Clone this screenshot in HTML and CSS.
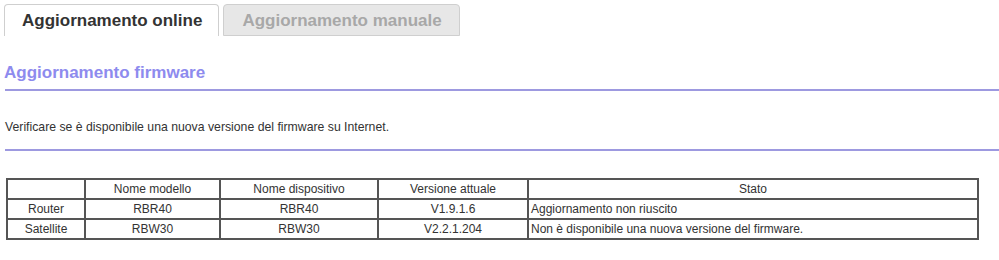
FILE: index.html
```html
<!DOCTYPE html>
<html lang="it">
<head>
<meta charset="utf-8">
<title>Aggiornamento firmware</title>
<link rel="stylesheet" href="styles.css">
</head>
<body>
<div class="tabs">
  <div class="tab active">Aggiornamento online</div>
  <div class="tab inactive">Aggiornamento manuale</div>
</div>
<h1 class="title">Aggiornamento firmware</h1>
<div class="rule"></div>
<p class="desc">Verificare se è disponibile una nuova versione del firmware su Internet.</p>
<div class="rule"></div>
<table class="grid">
  <colgroup>
    <col class="c1"><col class="c2"><col class="c3"><col class="c4"><col class="c5">
  </colgroup>
  <tr><td></td><td>Nome modello</td><td>Nome dispositivo</td><td>Versione attuale</td><td>Stato</td></tr>
  <tr><td>Router</td><td>RBR40</td><td>RBR40</td><td>V1.9.1.6</td><td class="left">Aggiornamento non riuscito</td></tr>
  <tr><td>Satellite</td><td>RBW30</td><td>RBW30</td><td>V2.2.1.204</td><td class="left">Non è disponibile una nuova versione del firmware.</td></tr>
</table>
</body>
</html>
```
FILE: styles.css
```css
html, body {
  margin: 0;
  padding: 0;
  background: #fff;
  font-family: "Liberation Sans", Arial, Helvetica, sans-serif;
  color: #333;
}
.tabs {
  display: flex;
  gap: 4px;
  padding: 4px 4px 0 4px;
}
.tab {
  box-sizing: border-box;
  height: 32px;
  padding: 0 16px 0 17px;
  font-size: 17px;
  font-weight: bold;
  line-height: 31px;
  border: 1px solid #cfcfcf;
  border-radius: 4px 4px 0 0;
}
.tab.active {
  background: #fff;
  color: #333;
  border-bottom: none;
}
.tab.inactive {
  background: #e7e7e7;
  color: #a8a8a8;
  padding: 0 17px 0 18px;
}
.title {
  margin: 27px 0 0 4px;
  font-size: 17px;
  line-height: 20px;
  font-weight: bold;
  color: #8e8bee;
}
.rule {
  height: 2px;
  margin-left: 5px;
  background: #9d99e0;
  margin-top: 6px;
}
.desc {
  margin: 29px 0 14px 5px;
  font-size: 12.25px;
  line-height: 15px;
}
.grid {
  margin: 27px 0 0 6px;
  width: 973px;
  border-collapse: collapse;
  border: 2px solid #555;
  font-size: 12px;
  color: #333;
  table-layout: fixed;
}
.grid td {
  border: 2px solid #555;
  height: 18px;
  padding: 0 2px;
  text-align: center;
  line-height: 16px;
}
.grid td.left {
  text-align: left;
}
.c1 { width: 78px; }
.c2 { width: 135px; }
.c3 { width: 158px; }
.c4 { width: 150px; }
.c5 { width: auto; }
```
